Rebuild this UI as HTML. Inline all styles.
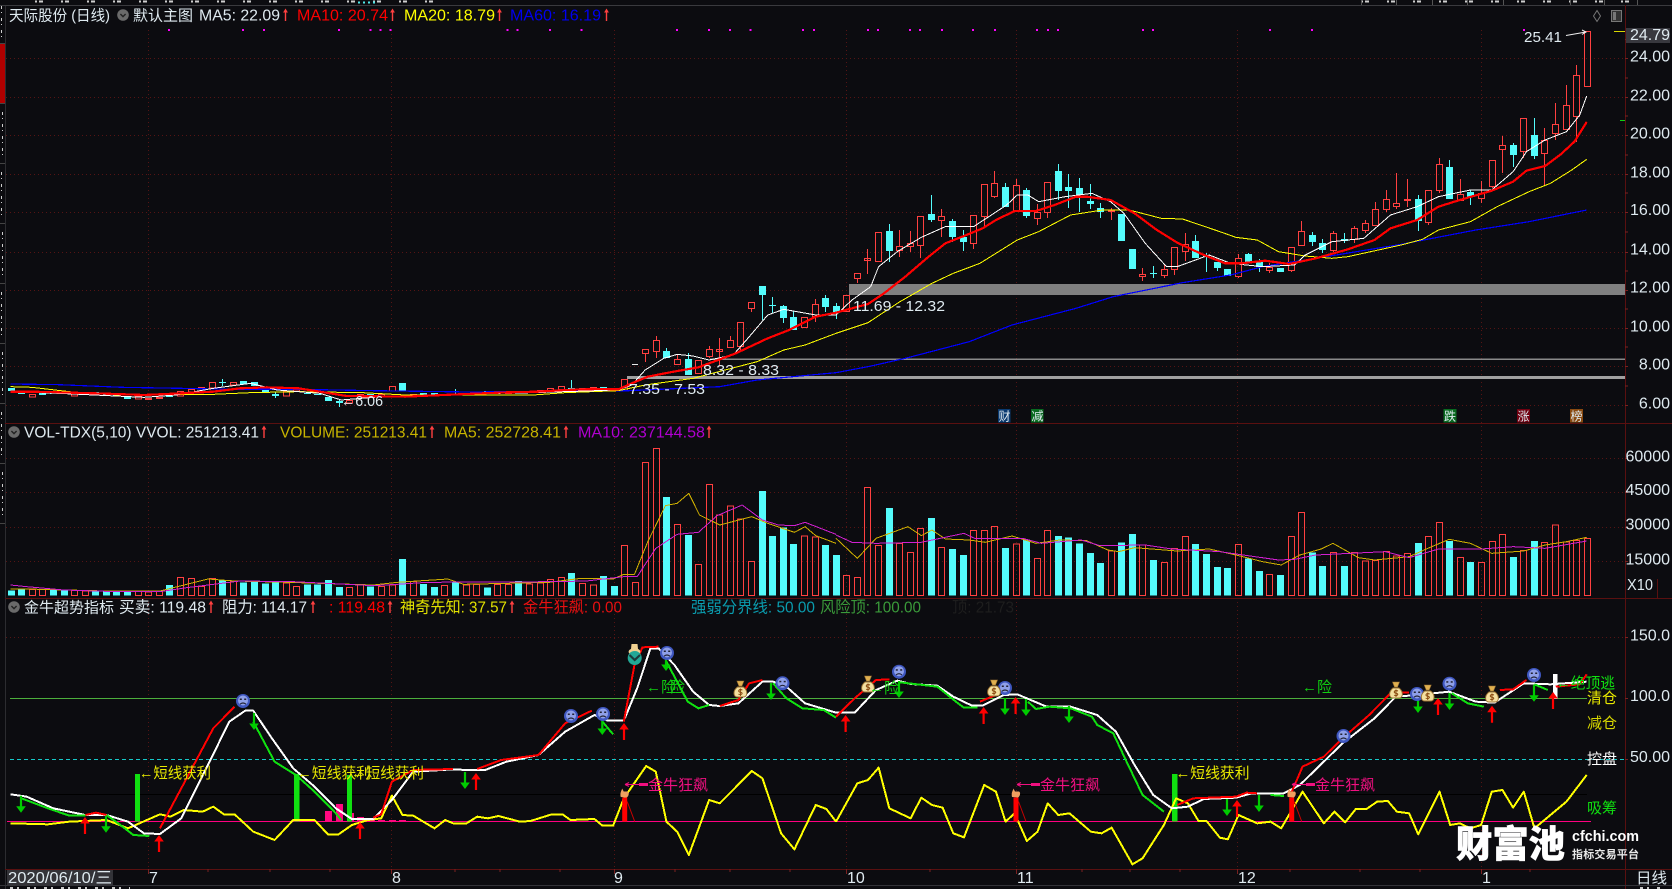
<!DOCTYPE html>
<html><head><meta charset="utf-8">
<style>
html,body{margin:0;padding:0;background:#0c0c10;width:1672px;height:889px;overflow:hidden}
svg{display:block;position:absolute;left:0;top:0}
text{font-family:"Liberation Sans","Noto Sans CJK SC",sans-serif;font-size:16px;fill:#dfeaf0}
polyline,.ns{fill:none;vector-effect:non-scaling-stroke;stroke-linejoin:round}
polyline{shape-rendering:crispEdges}
.ax{text-anchor:end}
</style></head><body>
<svg width="1672" height="889" viewBox="0 0 1672 889" xmlns="http://www.w3.org/2000/svg">
<defs>
<path id="ha" d="M0 -6.5L2.4 -2.5H.7V6H-.7V-2.5H-2.4Z" fill="#ff4040"/>
<g id="ci"><circle r="5.8" fill="#6a6a6a"/><path d="M-2.6 -1L0 1.6L2.6 -1" fill="none" stroke="#222" stroke-width="1.4"/></g>
<path id="ua" d="M0 0L4.8 6.5H1.1V17H-1.1V6.5H-4.8Z" fill="#f00"/>
<path id="da" d="M0 0L4.8 -6.5H1.1V-17H-1.1V-6.5H-4.8Z" fill="#0c0"/>
<g id="sad"><circle r="7" fill="#3f57c0"/><circle r="5" cy="-.5" fill="#8fa0e8"/><rect x="-3.2" y="-2.5" width="2" height="1.5" fill="#223"/><rect x="1.2" y="-2.5" width="2" height="1.5" fill="#223"/><path d="M-3 3.2Q0 .8 3 3.2" fill="none" stroke="#223" stroke-width="1.1"/></g>
<g id="bag"><path d="M-3 -2C-8 2 -7 8 -3 8H3C7 8 8 2 3 -2Z" fill="#f4e0a0" stroke="#9a7030"/><path d="M-3.5 -8H3.5L1.5 -3H-1.5Z" fill="#e0b050" stroke="#9a7030" stroke-width=".6"/><path d="M2 1C-2 -.5 -3 3 0 3.2C3 3.4 2 6.5 -2 5.2M0 -.5V7" fill="none" stroke="#8a4a10" stroke-width="1"/></g>
<g id="fl"><rect x="-2.5" y="0" width="5" height="24" fill="#f00"/><path d="M-4 -.5C-5 -5 -3 -7 -2.5 -9L-1 -6H3C5 -5 4 -1 2 0Z" fill="#f0a060"/><path d="M2.5 4L10 24" stroke="#c00" stroke-width="1" fill="none"/></g>
</defs>

<!-- frame -->
<rect x="0" y="0" width="1672" height="889" fill="#0c0c10"/>
<rect x="0" y="44" width="5" height="59" fill="#b00000"/>
<path d="M1.5 6V42M2.5 112V160M1.5 172V218M2.5 232V280M1.5 292V340M2.5 352V400M1.5 412V460M2.5 472V520" stroke="#cfcfcf" stroke-dasharray="3 3 1 5" fill="none"/>
<path d="M0 43.5H5M0 103.5H5M0 163.5H5M0 223.5H5M0 283.5H5M0 343.5H5M0 403.5H5M0 463.5H5M0 523.5H5" stroke="#444"/>
<path d="M5.5 5V889" stroke="#2c2c30"/>
<path d="M0 5.5H1672" stroke="#3a3a3e"/>
<path d="M35 1.5H450M1361 1.5H1630" stroke="#cfcfcf" stroke-width="2" stroke-dasharray="2 2 4 18"/>
<path d="M358 2.5H375" stroke="#50e8e8" stroke-width="2" stroke-dasharray="2 3"/>
<path d="M1361.5 0V5M1396.5 0V5M1432.5 0V5M1467.5 0V5M1503.5 0V5M1570.5 0V5M1604.5 0V5M1637.5 0V5" stroke="#555"/>

<!-- grids -->
<g stroke="#561414" stroke-dasharray="1 3" fill="none">
<path d="M6 58.5H1625M6 97.5H1625M6 135.5H1625M6 174.5H1625M6 212.5H1625M6 252.5H1625M6 290.5H1625M6 328.5H1625M6 366.5H1625M6 405.5H1625"/>
<path d="M6 458.5H1625M6 492.5H1625M6 527.5H1625M6 561.5H1625M6 637.5H1625"/>
<path d="M148.5 30V869M391.5 30V869M614.5 30V869M846.5 30V869M1016.5 30V869M1237.5 30V869M1481.5 30V869"/>
</g>
<path d="M1625.5 5V889M5 423.5H1625M5 598.5H1672M5 869.5H1672" stroke="#5a1010" fill="none"/>
<path d="M1625 423.5H1672" stroke="#5a1010"/>
<path d="M0 885.5H1672" stroke="#333338"/>
<path d="M10 888H130M1640 888H1660" stroke="#c8c8c8" stroke-width="2" stroke-dasharray="3 4 2 8"/>
<path d="M1625 39.5h3M1625 58.5h3M1625 78h3M1625 97.5h3M1625 116h3M1625 135.5h3M1625 155h3M1625 174.5h3M1625 193h3M1625 212.5h3M1625 232h3M1625 252.5h3M1625 271h3M1625 290.5h3M1625 309h3M1625 328.5h3M1625 347h3M1625 366.5h3M1625 386h3M1625 405.5h3M1625 458.5h3M1625 492.5h3M1625 527.5h3M1625 561.5h3M1625 637.5h3M1625 698.5h3M1625 759.5h3" stroke="#7a2020" fill="none"/>
<path d="M148.5 869v5M391.5 869v5M614.5 869v5M846.5 869v5M1016.5 869v5M1237.5 869v5M1481.5 869v5M208 869v3M270 869v3M330 869v3M455 869v3M500 869v3M560 869v3M675 869v3M730 869v3M790 869v3M930 869v3M1082 869v3M1130 869v3M1180 869v3M1290 869v3M1360 869v3M1420 869v3M1530 869v3" stroke="#7a2020" fill="none"/>

<!-- magenta markers -->
<path d="M168 30h2M242 30h2M263 30h2M338 30h2M369.5 30h2M379.5 30h2M389.5 30h2M506.5 30h2M516.5 30h2M549 30h2M580.5 30h2M676 30h2M708 30h2M729 30h2M749.5 30h2M802 30h2M813 30h2M867 30h2M877 30h2M909 30h2M919 30h2M941 30h2M972 30h2M994 30h2M1036 30h2M1047 30h2M1057 30h2M1142 30h2M1152 30h2M1269 30h2M1311 30h2M1523 30h2" stroke="#f0f" stroke-width="2" fill="none"/>

<!-- support bands -->
<rect x="849" y="284" width="776" height="11" fill="#808080"/>
<rect x="710" y="358.5" width="915" height="1.5" fill="#8a8a8a"/>
<rect x="627" y="376" width="998" height="3" fill="#a0a0a0"/>

<!-- candles: cyan -->
<g shape-rendering="crispEdges" fill="none">
<path stroke="#54fcfc" d="M1534.5 118V159M1513.5 143V167M1470.5 190V205M1449.5 160V199M1418.5 195V231M1344.5 233V243M1322.5 239V253M1312.5 232V246M1259.5 259V272M1248.5 253V263M1217.5 262V271M1206.5 253V272M1195.5 235V258M1153.5 266V278M1100.5 203V218M1090.5 184V209M1079.5 178V212M1068.5 174V208M1058.5 164V200M1026.5 188V218M1005.5 183V207M963.5 230V251M952.5 219V242M931.5 195V222M889.5 224V262M836.5 303V319M825.5 295V312M793.5 311V330M783.5 305V323M772.5 297V313M762.5 286V320M688.5 353V375M666.5 348V358M571.5 380V391M455.5 389V394M339.5 400V407M275.5 392V398M222.5 379V386"/>
<path stroke="#54fcfc" stroke-width="7" d="M1534.5 135V156M1513.5 145V155M1470.5 192V197M1449.5 167V199M1418.5 199V221M1344.5 239V241M1322.5 243V250M1312.5 235V242M1280.5 268V272M1259.5 262V267M1248.5 254V262M1227.5 269V276M1217.5 262V268M1206.5 255V257M1195.5 241V258M1153.5 273V274M1132.5 249V269M1121.5 214V241M1100.5 208V212M1090.5 201V204M1079.5 188V195M1068.5 187V191M1058.5 171V191M1026.5 190V216M1005.5 187V207M963.5 237V242M952.5 221V237M931.5 214V220M889.5 231V251M836.5 306V313M825.5 298V307M793.5 317V330M783.5 306V318M772.5 305V306M762.5 286V295M688.5 359V375M666.5 351V358M614.5 388V390M603.5 387V389M571.5 388V390M518.5 391V393M487.5 391V393M455.5 391V392M434.5 393V395M423.5 393V395M402.5 383V391M370.5 394V396M339.5 401V403M328.5 397V401M317.5 394V395M307.5 393V394M275.5 394V396M265.5 388V393M254.5 382V386M243.5 381V384M222.5 382V383M169.5 396V397M127.5 396V399M116.5 394V396M106.5 393V395M95.5 392V394M64.5 392V394M53.5 392V394M42.5 391V395M21.5 392V394M11.5 388V391"/>
<!-- candles: red -->
<path stroke="#ff4040" d="M1584.5 31.5h6V86.5h-6zM1576.5 65V75.5M1573.5 75.5h6V116.5h-6zM1576.5 116.5V142M1566.5 85V105.5M1563.5 105.5h6V129.5h-6zM1555.5 103V124.5M1552.5 124.5h6V133.5h-6zM1555.5 133.5V140M1544.5 128V140.5M1541.5 140.5h6V153.5h-6zM1544.5 153.5V185M1520.5 118.5h6V151.5h-6zM1523.5 151.5V158M1502.5 136V145.5M1499.5 145.5h6V149.5h-6zM1502.5 149.5V173M1489.5 160.5h6V186.5h-6zM1492.5 186.5V188M1481.5 181V193.5M1478.5 193.5h6V198.5h-6zM1481.5 198.5V203M1460.5 179V194.5M1457.5 194.5h6V200.5h-6zM1439.5 158V164.5M1436.5 164.5h6V190.5h-6zM1439.5 190.5V193M1425.5 190.5h6V222.5h-6zM1428.5 222.5V225M1407.5 179V207M1404.5 199.5h6V200.5h-6zM1396.5 173V203.5M1393.5 203.5h6V206.5h-6zM1396.5 206.5V209M1386.5 190V199.5M1383.5 199.5h6V209.5h-6zM1386.5 209.5V212M1375.5 202V209.5M1372.5 209.5h6V225.5h-6zM1365.5 220V223.5M1362.5 223.5h6V230.5h-6zM1365.5 230.5V233M1354.5 226V228.5M1351.5 228.5h6V239.5h-6zM1354.5 239.5V243M1333.5 231V233.5M1330.5 233.5h6V250.5h-6zM1333.5 250.5V252M1301.5 221V231.5M1298.5 231.5h6V245.5h-6zM1288.5 247.5h6V270.5h-6zM1291.5 270.5V272M1269.5 263V267.5M1266.5 267.5h6V270.5h-6zM1269.5 270.5V273M1238.5 254V258.5M1235.5 258.5h6V276.5h-6zM1238.5 276.5V278M1185.5 233V244.5M1182.5 244.5h6V251.5h-6zM1185.5 251.5V261M1171.5 247.5h6V269.5h-6zM1174.5 269.5V275M1164.5 265V269.5M1161.5 269.5h6V275.5h-6zM1164.5 275.5V278M1142.5 268V274.5M1139.5 274.5h6V276.5h-6zM1142.5 276.5V281M1111.5 208V220M1108.5 210.5h6V211.5h-6zM1044.5 182.5h6V212.5h-6zM1047.5 212.5V218M1037.5 204V212.5M1034.5 212.5h6V218.5h-6zM1037.5 218.5V225M1016.5 179V185.5M1013.5 185.5h6V211.5h-6zM994.5 171V183.5M991.5 183.5h6V196.5h-6zM994.5 196.5V198M981.5 184.5h6V216.5h-6zM984.5 216.5V227M970.5 215.5h6V243.5h-6zM973.5 243.5V249M941.5 209V216.5M938.5 216.5h6V220.5h-6zM941.5 220.5V237M917.5 216.5h6V245.5h-6zM920.5 245.5V258M910.5 231V243.5M907.5 243.5h6V246.5h-6zM910.5 246.5V252M899.5 230V246.5M896.5 246.5h6V250.5h-6zM899.5 250.5V257M875.5 232.5h6V261.5h-6zM867.5 249V274M864.5 258.5h6V260.5h-6zM854.5 273.5h6V278.5h-6zM857.5 278.5V283M843.5 295.5h6V311.5h-6zM815.5 299V304.5M812.5 304.5h6V316.5h-6zM815.5 316.5V322M801.5 317.5h6V327.5h-6zM748.5 302.5h6V308.5h-6zM751.5 308.5V312M737.5 322.5h6V346.5h-6zM740.5 346.5V350M730.5 336V340.5M727.5 340.5h6V347.5h-6zM719.5 338V365M716.5 349.5h6V351.5h-6zM709.5 346V349.5M706.5 349.5h6V356.5h-6zM709.5 356.5V358M695.5 360.5h6V373.5h-6zM677.5 355V359.5M674.5 359.5h6V364.5h-6zM656.5 336V340.5M653.5 340.5h6V351.5h-6zM656.5 351.5V358M642.5 349.5h6V353.5h-6zM645.5 353.5V362M621.5 379.5h6V390.5h-6zM590.5 387.5h6v2.5h-6zM579.5 388.5h6v2.5h-6zM558.5 386.5h6v3h-6zM547.5 388.5h6v2.5h-6zM537.5 390.5h6v2h-6zM505.5 391.5h6v2h-6zM494.5 391.5h6v2h-6zM410.5 394.5h6v1.5h-6zM389.5 386.5h6v4.5h-6zM378.5 394.5h6v1.5h-6zM357.5 394.5h6v1.5h-6zM346.5 400.5h6v2.5h-6zM293.5 389.5h6v1.5h-6zM283.5 391.5h6v4.5h-6zM230.5 382.5h6v2.5h-6zM209.5 382.5h6v5.5h-6zM198.5 387.5h6v1.5h-6zM188.5 389.5h6v2.5h-6zM177.5 391.5h6v4.5h-6zM156.5 397.5h6v1h-6zM145.5 398.5h6v1h-6zM135.5 396.5h6v2.5h-6zM82.5 392.5h6v1.5h-6zM71.5 393.5h6v2.5h-6zM29.5 394.5h6v2.5h-6z"/>
</g>
<path d="M632 364.5h6" stroke="#e8e8e8"/>

<!-- MA lines left -->
<g transform="scale(.53316,.33333)">
<polyline stroke="#0000ff" stroke-width="1.2" points="20,1152 110,1154 230,1162 340,1165 430,1168 560,1168 700,1172 880,1176 1180,1172 1350,1160 1420,1140 1568,1118"/>
<polyline stroke="#ffff00" stroke-width="1" points="20,1160 60,1162 130,1175 220,1185 330,1183 400,1183 470,1178 560,1175 680,1178 760,1185 1000,1185 1060,1178 1160,1172 1210,1155 1300,1135 1420,1085 1470,1050 1510,1035 1568,1000"/>
<polyline stroke="#ffffff" stroke-width="1" points="20,1175 110,1180 270,1192 330,1185 400,1165 470,1150 520,1170 600,1180 640,1200 700,1192 860,1182 1000,1178 1160,1170 1185,1155 1210,1110 1245,1075 1270,1063 1300,1068 1330,1080 1375,1065 1400,1020 1440,945 1470,928 1530,945 1568,945"/>
<polyline stroke="#ff0000" stroke-width="2.2" points="20,1175 60,1175 110,1177 180,1180 270,1185 340,1180 400,1175 450,1165 500,1162 560,1165 600,1175 650,1188 760,1190 860,1183 950,1177 1010,1175 1060,1170 1120,1167 1160,1168 1185,1150 1215,1130 1260,1116 1310,1102 1350,1078 1380,1060 1440,1015 1480,990 1530,950 1568,938"/>
</g>
<!-- MA lines right -->
<g transform="translate(836,0) scale(.53316,.33333)">
<polyline stroke="#0000ff" stroke-width="1.2" points="0,1118 60,1100 130,1075 250,1025 330,975 450,925 520,890 650,848 740,825 800,800 900,775 1060,733 1200,690 1300,665 1408,630"/>
<polyline stroke="#ffff00" stroke-width="1" points="0,1000 60,968 120,905 180,850 220,820 270,790 340,720 380,695 440,645 500,630 550,630 610,655 650,657 720,695 750,712 790,720 830,755 880,768 930,775 960,770 1060,735 1100,718 1130,690 1190,665 1240,620 1300,575 1340,550 1380,510 1408,478"/>
<polyline stroke="#ffffff" stroke-width="1" points="0,945 30,900 65,860 80,800 115,755 160,712 205,680 258,680 320,615 340,585 360,585 380,605 430,590 480,580 515,605 540,640 580,730 620,800 640,800 700,765 740,790 800,800 860,795 880,765 930,725 990,715 1040,645 1090,620 1130,590 1190,570 1230,570 1270,515 1295,455 1330,420 1370,395 1395,345 1408,288"/>
<polyline stroke="#ff0000" stroke-width="2.2" points="0,938 30,925 60,912 90,880 130,830 170,775 205,730 240,708 275,685 300,660 335,633 375,633 410,615 450,590 470,590 515,600 560,640 600,688 640,728 690,765 730,790 760,790 805,782 850,792 900,775 960,748 1010,720 1040,685 1090,660 1130,620 1170,600 1230,572 1270,545 1295,512 1330,498 1360,462 1385,425 1408,366"/>
</g>

<!-- main pane labels -->
<text x="853" y="311" style="font-size:15px" textLength="92" lengthAdjust="spacingAndGlyphs">11.69 - 12.32</text>
<text x="703" y="375" style="font-size:15px" textLength="76" lengthAdjust="spacingAndGlyphs">8.32 - 8.33</text>
<text x="629" y="394" style="font-size:15px" textLength="76" lengthAdjust="spacingAndGlyphs">7.35 - 7.53</text>
<text x="1524" y="42" style="font-size:15px" textLength="38" lengthAdjust="spacingAndGlyphs">25.41</text>
<path d="M1566 35.5L1586 32M1582 30L1586 32L1582 34.5" stroke="#eee" fill="none"/>
<text x="341" y="406" style="font-size:15px" textLength="42" lengthAdjust="spacingAndGlyphs">←6.06</text>

<!-- event tags -->
<rect x="998" y="409" width="12.5" height="13.5" fill="#0a3a70"/><text x="998.5" y="420.5" style="font-size:12px">财</text>
<rect x="1031" y="409" width="12.5" height="13.5" fill="#0a6a20"/><text x="1031.5" y="420.5" style="font-size:12px">减</text>
<rect x="1443.5" y="409" width="13" height="13.5" fill="#0a6a20"/><text x="1444" y="420.5" style="font-size:12px">跌</text>
<rect x="1517" y="409" width="13" height="13.5" fill="#700010"/><text x="1517.5" y="420.5" style="font-size:12px">涨</text>
<rect x="1570" y="409" width="13" height="13.5" fill="#8a4a10"/><text x="1570.5" y="420.5" style="font-size:12px">榜</text>

<!-- volume bars -->
<g transform="translate(0,445) scale(1,.33333)" shape-rendering="crispEdges">
<path class="ns" stroke="#54fcfc" stroke-width="7" d="M1534.5 288V452M1513.5 336V452M1470.5 351V452M1449.5 288V452M1418.5 294V452M1344.5 363V452M1322.5 363V452M1312.5 322V452M1280.5 390V452M1259.5 378V452M1248.5 340V452M1227.5 369V452M1217.5 366V452M1206.5 327V452M1195.5 297V452M1153.5 345V452M1132.5 267V452M1121.5 292V452M1100.5 354V452M1090.5 324V452M1079.5 296V452M1068.5 277V452M1058.5 273V452M1026.5 283V452M1005.5 309V452M963.5 330V452M952.5 312V452M931.5 219V452M889.5 189V452M836.5 330V452M825.5 300V452M793.5 297V452M783.5 248V452M772.5 273V452M762.5 138V452M688.5 270V452M666.5 156V452M614.5 423V452M603.5 393V452M571.5 384V452M518.5 408V452M487.5 428V452M455.5 413V452M434.5 426V452M423.5 417V452M402.5 342V452M370.5 425V452M339.5 426V452M328.5 405V452M317.5 418V452M307.5 418V452M275.5 412V452M265.5 416V452M254.5 411V452M243.5 412V452M222.5 407V452M169.5 420V452M127.5 440V452M116.5 436V452M106.5 436V452M95.5 436V452M64.5 435V452M53.5 435V452M21.5 430V452M11.5 437V452"/>
<path class="ns" stroke="#ff4040" stroke-width="1" d="M1584.5 280V452h6V280zM1573.5 287V452h6V287zM1563.5 291V452h6V291zM1552.5 240V452h6V240zM1541.5 292V452h6V292zM1520.5 316V452h6V316zM1499.5 268V452h6V268zM1489.5 289V452h6V289zM1478.5 352V452h6V352zM1457.5 337V452h6V337zM1436.5 232V452h6V232zM1425.5 274V452h6V274zM1404.5 325V452h6V325zM1393.5 333V452h6V333zM1383.5 320V452h6V320zM1372.5 346V452h6V346zM1362.5 348V452h6V348zM1351.5 322V452h6V322zM1330.5 322V452h6V322zM1298.5 202V452h6V202zM1288.5 274V452h6V274zM1266.5 388V452h6V388zM1235.5 298V452h6V298zM1182.5 274V452h6V274zM1171.5 310V452h6V310zM1161.5 352V452h6V352zM1139.5 300V452h6V300zM1108.5 318V452h6V318zM1044.5 256V452h6V256zM1034.5 340V452h6V340zM1013.5 297V452h6V297zM991.5 244V452h6V244zM981.5 256V452h6V256zM970.5 256V452h6V256zM938.5 307V452h6V307zM917.5 250V452h6V250zM907.5 322V452h6V322zM896.5 295V452h6V295zM875.5 302V452h6V302zM864.5 127V452h6V127zM854.5 397V452h6V397zM843.5 392V452h6V392zM812.5 276V452h6V276zM801.5 273V452h6V273zM748.5 349V452h6V349zM737.5 222V452h6V222zM727.5 183V452h6V183zM716.5 210V452h6V210zM706.5 118V452h6V118zM695.5 358V452h6V358zM674.5 238V452h6V238zM653.5 10V452h6V10zM642.5 52V452h6V52zM632.5 412V452h6V412zM621.5 301V452h6V301zM590.5 420V452h6V420zM579.5 415V452h6V415zM558.5 397V452h6V397zM547.5 404V452h6V404zM537.5 414V452h6V414zM526.5 417V452h6V417zM505.5 418V452h6V418zM494.5 418V452h6V418zM473.5 418V452h6V418zM463.5 420V452h6V420zM441.5 422V452h6V422zM410.5 410V452h6V410zM389.5 420V452h6V420zM378.5 425V452h6V425zM357.5 420V452h6V420zM346.5 427V452h6V427zM293.5 425V452h6V425zM283.5 414V452h6V414zM230.5 408V452h6V408zM209.5 400V452h6V400zM198.5 425V452h6V425zM188.5 400V452h6V400zM177.5 397V452h6V397zM156.5 438V452h6V438zM145.5 441V452h6V441zM135.5 438V452h6V438zM82.5 438V452h6V438zM71.5 436V452h6V436zM39.5 433V452h6V433zM29.5 433V452h6V433z"/>
</g>
<g transform="translate(0,445) scale(.53316,.33333)">
<polyline stroke="#d0b000" points="20,432 50,432 100,434 200,438 300,438 340,422 390,402 440,408 540,412 700,420 745,412 840,402 870,418 1030,412 1090,400 1150,402 1170,388 1190,388 1215,290 1248,182 1270,175 1292,145 1312,210 1350,240 1410,215 1440,235 1490,262 1510,245 1530,272 1568,295"/>
<polyline stroke="#d020d0" points="20,420 50,425 120,435 220,440 300,440 350,428 450,408 550,410 700,422 745,418 800,412 1040,410 1100,408 1170,395 1195,395 1230,310 1270,268 1310,262 1345,212 1392,180 1430,225 1460,240 1490,242 1510,232 1568,268"/>
</g>
<g transform="translate(836,445) scale(.53316,.33333)">
<polyline stroke="#d0b000" points="0,280 40,340 75,280 135,245 160,272 180,255 205,282 250,285 280,292 330,273 375,295 420,285 470,287 510,315 530,320 560,308 640,318 700,312 750,330 800,350 835,360 870,330 910,312 932,295 980,338 1010,345 1075,335 1110,310 1150,283 1190,295 1230,325 1290,318 1330,300 1370,290 1408,277"/>
<polyline stroke="#d020d0" points="0,270 30,292 75,295 160,292 240,265 260,280 350,280 385,295 460,285 495,302 580,300 630,312 720,320 830,345 860,343 900,330 1030,320 1075,338 1130,312 1210,312 1270,305 1330,310 1408,288"/>
</g>

<!-- indicator pane horizontal lines -->
<path d="M10 698.5H1587" stroke="#4caf3c"/>
<path d="M10 759.5H1625" stroke="#16c8c8" stroke-dasharray="4 3"/>
<path d="M10 794.5H1587" stroke="#000"/>
<path d="M7 821.5H1591" stroke="#ff0080"/>

<!-- indicator bars -->
<g fill="#ff0880">
<rect x="325" y="811" width="7" height="10.5"/><rect x="336" y="804" width="7" height="17.5"/><rect x="351" y="813" width="3" height="8.5"/><rect x="357" y="817" width="7" height="4.5"/><rect x="368" y="819" width="7" height="2.5"/><rect x="378" y="820" width="7" height="1.5"/><rect x="389" y="820" width="7" height="1.5"/><rect x="399" y="820" width="7" height="1.5"/>
</g>
<g fill="#10e010">
<rect x="135" y="774" width="5" height="47.5"/><rect x="294" y="774" width="5.5" height="47.5"/><rect x="347" y="775" width="5" height="46.5"/><rect x="1172" y="774" width="5.5" height="47.5"/>
</g>
<rect x="1553" y="674" width="4.5" height="25" fill="#fff"/>

<!-- indicator lines left -->
<g transform="translate(0,445) scale(.53316,.33333)">
<polyline stroke="#ffff00" stroke-width="2" points="20,1135 90,1138 130,1130 200,1125 240,1150 280,1122 300,1108 320,1115 345,1095 380,1100 400,1085 420,1108 440,1108 475,1160 515,1185 550,1125 590,1125 615,1168 635,1168 660,1140 690,1125 715,1120 735,1052 755,1110 775,1112 815,1150 835,1125 850,1135 875,1135 895,1115 915,1120 935,1113 975,1130 995,1128 1035,1108 1055,1108 1070,1125 1115,1122 1130,1142 1150,1142 1170,1060 1212,963 1230,980 1250,1130 1270,1160 1292,1230 1330,1065 1350,1075 1410,978 1430,1000 1465,1165 1490,1213 1530,1080 1550,1092 1568,1130"/>
<polyline stroke="#ffffff" stroke-width="2" points="20,1048 50,1055 100,1090 160,1110 200,1110 240,1130 270,1165 300,1167 340,1120 390,960 430,830 460,797 475,797 510,880 550,970 590,1025 630,1090 660,1122 700,1122 735,1065 775,980 850,973 875,975 910,975 950,950 1010,930 1060,860 1115,810 1140,827 1170,827 1195,730 1220,610 1235,610 1265,660 1300,740 1330,780 1350,783 1385,775 1430,710 1450,710 1475,725 1510,775 1568,803"/>
<g stroke="#ff0000" stroke-width="2">
<polyline points="160,1110 180,1103 200,1110"/>
<polyline points="300,1150 340,1030 400,850 440,785"/>
<polyline points="700,1118 715,1108 735,1010 775,975 850,972"/>
<polyline points="895,972 940,945 1010,930 1060,835 1110,797"/>
<polyline points="1170,830 1190,660 1205,607 1235,605"/>
<polyline points="1350,783 1385,765 1405,715 1430,705"/>
</g>
<g stroke="#10e010" stroke-width="2">
<polyline points="40,1060 90,1090 130,1112 160,1112"/>
<polyline points="200,1110 230,1145 250,1170 280,1173"/>
<polyline points="475,830 515,950 555,990 590,1040 630,1105 640,1125"/>
<polyline points="1130,830 1150,868"/>
<polyline points="1250,650 1290,770 1310,790 1330,780"/>
<polyline points="1450,715 1475,760 1505,790 1545,795 1568,818"/>
</g>
</g>
<!-- indicator lines right -->
<g transform="translate(836,445) scale(.53316,.33333)">
<polyline stroke="#ffff00" stroke-width="2" points="0,1130 40,1015 60,1005 80,968 100,1090 140,1120 160,1058 180,1080 200,1088 220,1165 240,1177 278,1020 300,1040 318,1130 335,1105 358,1188 378,1160 397,1075 417,1110 438,1105 478,1160 498,1165 517,1148 556,1258 575,1240 615,1140 638,1060 660,1075 680,1128 695,1128 720,1178 735,1183 755,1110 790,1135 815,1130 835,1150 875,1040 915,1135 935,1100 955,1132 975,1092 995,1092 1015,1070 1035,1068 1052,1100 1075,1105 1092,1168 1132,1040 1152,1140 1170,1135 1190,1150 1210,1140 1230,1040 1250,1035 1270,1088 1290,1040 1310,1150 1370,1070 1408,990"/>
<polyline stroke="#ffffff" stroke-width="2" points="0,803 35,803 75,735 115,707 140,717 190,722 220,755 255,782 275,782 315,750 340,748 395,785 440,785 490,810 525,860 560,960 595,1050 630,1090 660,1085 690,1062 750,1058 780,1045 840,1045 870,1020 950,895 1010,820 1050,755 1090,750 1150,740 1200,770 1235,773 1290,715 1340,718 1408,710"/>
<g stroke="#ff0000" stroke-width="2">
<polyline points="0,815 35,760 75,705 100,703"/>
<polyline points="270,770 300,750"/>
<polyline points="640,1080 670,1060 750,1055 770,1043 790,1045"/>
<polyline points="855,1040 875,965 915,935 950,880 1000,810 1040,745 1075,742"/>
<polyline points="1245,735 1270,733 1295,705"/>
<polyline points="1350,725 1395,718 1408,688"/>
</g>
<g stroke="#10e010" stroke-width="2">
<polyline points="120,712 190,725 225,770 240,788 265,788"/>
<polyline points="360,770 375,792 400,785 440,790 480,815 490,840 520,865 545,950 575,1050 615,1100"/>
<polyline points="815,1050 840,1053"/>
<polyline points="1155,745 1185,775 1215,785"/>
<polyline points="1310,718 1335,735"/>
</g>
</g>

<!-- arrows -->
<use href="#ua" x="85" y="817"/><use href="#ua" x="159" y="835"/><use href="#ua" x="360" y="822"/><use href="#ua" x="476" y="773"/><use href="#ua" x="624" y="723"/><use href="#ua" x="845.6" y="715"/><use href="#ua" x="983.6" y="707"/><use href="#ua" x="1015.6" y="697"/><use href="#ua" x="1237" y="800"/><use href="#ua" x="1438" y="698"/><use href="#ua" x="1492" y="705.7"/><use href="#ua" x="1553" y="692"/>
<use href="#da" x="21" y="812.7"/><use href="#da" x="106" y="832.7"/><use href="#da" x="254" y="730"/><use href="#da" x="465" y="789"/><use href="#da" x="602.3" y="735"/><use href="#da" x="666" y="671"/><use href="#da" x="771" y="700"/><use href="#da" x="899" y="698"/><use href="#da" x="1005" y="715"/><use href="#da" x="1026" y="716"/><use href="#da" x="1069" y="723"/><use href="#da" x="1227" y="816"/><use href="#da" x="1259" y="812"/><use href="#da" x="1418" y="713"/><use href="#da" x="1449.5" y="710"/><use href="#da" x="1534" y="701.7"/>

<!-- face / bag icons -->
<use href="#sad" x="243" y="701"/><use href="#sad" x="571" y="716"/><use href="#sad" x="603" y="714"/><use href="#sad" x="667" y="653"/><use href="#sad" x="782.5" y="683.3"/><use href="#sad" x="899" y="671.7"/><use href="#sad" x="1005" y="688"/><use href="#sad" x="1343.5" y="736"/><use href="#sad" x="1417" y="694"/><use href="#sad" x="1449.5" y="683.7"/><use href="#sad" x="1534" y="675"/>
<use href="#bag" x="740.4" y="689"/><use href="#bag" x="868" y="684"/><use href="#bag" x="994" y="688"/><use href="#bag" x="1396" y="690"/><use href="#bag" x="1427.7" y="693"/><use href="#bag" x="1492" y="694"/>
<!-- special teal icon -->
<path d="M631.5 644H637.5L638 649C641 650 641 653 639 654H630C628 653 628 650 631 649Z" fill="#f0d090"/>
<circle cx="634.7" cy="658" r="7" fill="#22a896"/><path d="M629.5 655L634.7 660L640 655" stroke="#1c3a3a" stroke-width="2.2" fill="none"/>
<!-- flames -->
<use href="#fl" x="624.7" y="797.5"/><use href="#fl" x="1016" y="797.5"/><use href="#fl" x="1291.7" y="797.5"/>

<!-- indicator labels -->
<text x="139" y="778" style="font-size:15px;fill:#e8e800" textLength="72" lengthAdjust="spacingAndGlyphs">←短线获利</text>
<text x="297" y="778" style="font-size:15px;fill:#e8e800" textLength="74" lengthAdjust="spacingAndGlyphs">←短线获利</text>
<text x="351" y="778" style="font-size:15px;fill:#e8e800" textLength="73" lengthAdjust="spacingAndGlyphs">←短线获利</text>
<text x="1175.5" y="778" style="font-size:15px;fill:#e8e800" textLength="74" lengthAdjust="spacingAndGlyphs">←短线获利</text>
<text x="646" y="692" style="font-size:15px;fill:#10d010" textLength="30" lengthAdjust="spacingAndGlyphs">←险</text>
<text x="670" y="692" style="font-size:15px;fill:#10d010">险</text>
<text x="869" y="693" style="font-size:15px;fill:#10d010" textLength="30" lengthAdjust="spacingAndGlyphs">←险</text>
<text x="1302" y="692" style="font-size:15px;fill:#10d010" textLength="30" lengthAdjust="spacingAndGlyphs">←险</text>
<text x="1556" y="688" style="font-size:15px;fill:#10e010" textLength="59" lengthAdjust="spacingAndGlyphs">←绝顶逃</text>
<text x="648" y="790" style="font-size:15px;fill:#f01080">金牛狂飙</text>
<text x="1040" y="790" style="font-size:15px;fill:#f01080">金牛狂飙</text>
<text x="1315" y="790" style="font-size:15px;fill:#f01080">金牛狂飙</text>
<text x="1587" y="703" style="font-size:15px;fill:#e8e800">清仓</text>
<text x="1587" y="728" style="font-size:15px;fill:#d8d800">减仓</text>
<text x="1587" y="764" style="font-size:15px;fill:#fff">控盘</text>
<text x="1587" y="813" style="font-size:15px;fill:#10e010">吸筹</text>
<path d="M625 784.5H648M625 784.5L629 782.5M625 784.5L629 786.5" stroke="#f01080" fill="none"/><rect x="639" y="783" width="9" height="3" fill="#f01080"/>
<path d="M1017 784.5H1040M1017 784.5L1021 782.5M1017 784.5L1021 786.5" stroke="#f01080" fill="none"/><rect x="1031" y="783" width="9" height="3" fill="#f01080"/>
<path d="M1292 784.5H1315M1292 784.5L1296 782.5M1292 784.5L1296 786.5" stroke="#f01080" fill="none"/><rect x="1306" y="783" width="9" height="3" fill="#f01080"/>

<!-- headers -->
<text x="9" y="20.5" style="font-size:15px" textLength="101" lengthAdjust="spacingAndGlyphs">天际股份 (日线)</text>
<use href="#ci" x="123" y="15"/>
<text x="133" y="20.5" style="font-size:15px" textLength="60">默认主图</text>
<text x="199" y="20.5" textLength="81" lengthAdjust="spacingAndGlyphs">MA5: 22.09</text><use href="#ha" x="285.5" y="15"/>
<text x="297" y="20.5" style="fill:#f00" textLength="91" lengthAdjust="spacingAndGlyphs">MA10: 20.74</text><use href="#ha" x="392.5" y="15"/>
<text x="404" y="20.5" style="fill:#ff0" textLength="91" lengthAdjust="spacingAndGlyphs">MA20: 18.79</text><use href="#ha" x="499.5" y="15"/>
<text x="510" y="20.5" style="fill:#0000f0" textLength="91" lengthAdjust="spacingAndGlyphs">MA60: 16.19</text><use href="#ha" x="606.5" y="15"/>

<use href="#ci" x="14" y="432"/>
<text x="24" y="437.5" textLength="235" lengthAdjust="spacingAndGlyphs">VOL-TDX(5,10) VVOL: 251213.41</text><use href="#ha" x="264" y="432"/>
<text x="280" y="437.5" style="fill:#c8b400" textLength="147" lengthAdjust="spacingAndGlyphs">VOLUME: 251213.41</text><use href="#ha" x="432" y="432"/>
<text x="444" y="437.5" style="fill:#c8b400" textLength="117" lengthAdjust="spacingAndGlyphs">MA5: 252728.41</text><use href="#ha" x="566" y="432"/>
<text x="578" y="437.5" style="fill:#b000d0" textLength="127" lengthAdjust="spacingAndGlyphs">MA10: 237144.58</text><use href="#ha" x="709" y="432"/>

<use href="#ci" x="14" y="607"/>
<text x="24" y="612.5" style="font-size:15px" textLength="90" lengthAdjust="spacingAndGlyphs">金牛超势指标</text>
<text x="119" y="612.5" textLength="87" lengthAdjust="spacingAndGlyphs">买卖: 119.48</text><use href="#ha" x="211" y="607"/>
<text x="222" y="612.5" textLength="85" lengthAdjust="spacingAndGlyphs">阻力: 114.17</text><use href="#ha" x="313" y="607"/>
<text x="329" y="612.5" style="fill:#f00" textLength="56" lengthAdjust="spacingAndGlyphs">: 119.48</text><use href="#ha" x="390" y="607"/>
<text x="400" y="612.5" style="fill:#e0e000" textLength="107" lengthAdjust="spacingAndGlyphs">神奇先知: 37.57</text><use href="#ha" x="512" y="607"/>
<text x="523" y="612.5" style="fill:#e81010" textLength="99" lengthAdjust="spacingAndGlyphs">金牛狂飙: 0.00</text>
<text x="691" y="612.5" style="fill:#0a9cae" textLength="124" lengthAdjust="spacingAndGlyphs">强弱分界线: 50.00</text>
<text x="820" y="612.5" style="fill:#3a9a3a" textLength="101" lengthAdjust="spacingAndGlyphs">风险顶: 100.00</text>
<text x="952" y="612.5" style="fill:#1e1e1e" textLength="62" lengthAdjust="spacingAndGlyphs">顶: 21.73</text>

<!-- axes -->
<rect x="1626" y="28" width="44" height="15" fill="#38383e"/>
<path d="M1614 31.5H1625" stroke="#d8d800"/><path d="M1620 120.5H1625" stroke="#10d010"/>
<text x="1670" y="40" class="ax">24.79</text>
<text x="1670" y="61.5" class="ax">24.00</text>
<text x="1670" y="100.5" class="ax">22.00</text>
<text x="1670" y="138.5" class="ax">20.00</text>
<text x="1670" y="177.5" class="ax">18.00</text>
<text x="1670" y="215" class="ax">16.00</text>
<text x="1670" y="254.5" class="ax">14.00</text>
<text x="1670" y="292.5" class="ax">12.00</text>
<text x="1670" y="331.5" class="ax">10.00</text>
<text x="1670" y="369.5" class="ax">8.00</text>
<text x="1670" y="408.5" class="ax">6.00</text>
<text x="1670" y="461.5" class="ax">60000</text>
<text x="1670" y="495" class="ax">45000</text>
<text x="1670" y="529.5" class="ax">30000</text>
<text x="1670" y="564.5" class="ax">15000</text>
<text x="1670" y="640.5" class="ax">150.0</text>
<text x="1670" y="701" class="ax">100.0</text>
<text x="1670" y="762" class="ax">50.00</text>
<text x="1627" y="590" textLength="26" lengthAdjust="spacingAndGlyphs">X10</text>
<path d="M1657.5 579V598" stroke="#5a1010"/>

<!-- top-right icons -->
<path d="M1597 10.5L1600.5 16L1597 21.5L1593.5 16Z" fill="none" stroke="#777"/>
<rect x="1611.5" y="10.5" width="10" height="11" fill="#333" stroke="#777"/><rect x="1613" y="12" width="3" height="8" fill="#777"/>

<!-- time axis -->
<rect x="7" y="870" width="106" height="15" fill="#333338"/>
<text x="8" y="883" textLength="104" lengthAdjust="spacingAndGlyphs">2020/06/10/三</text>
<text x="149" y="883">7</text><text x="392" y="883">8</text><text x="614" y="883">9</text>
<text x="847" y="883">10</text><text x="1017" y="883">11</text><text x="1238" y="883">12</text><text x="1482" y="883">1</text>
<text x="1636" y="883" style="font-size:15px" textLength="31" lengthAdjust="spacingAndGlyphs">日线</text>

<!-- watermark -->
<text x="1456" y="857" style="font-size:37px;font-weight:900;fill:#fff;stroke:#fff;stroke-width:.6;font-family:'Noto Sans CJK SC','Liberation Sans',sans-serif" textLength="109" lengthAdjust="spacingAndGlyphs">财富池</text>
<text x="1572" y="841" style="font-size:15px;font-weight:700;fill:#fff" textLength="67" lengthAdjust="spacingAndGlyphs">cfchi.com</text>
<text x="1572" y="858" style="font-size:11px;font-weight:700;fill:#e8e8e8" textLength="67">指标交易平台</text>
</svg>
</body></html>
